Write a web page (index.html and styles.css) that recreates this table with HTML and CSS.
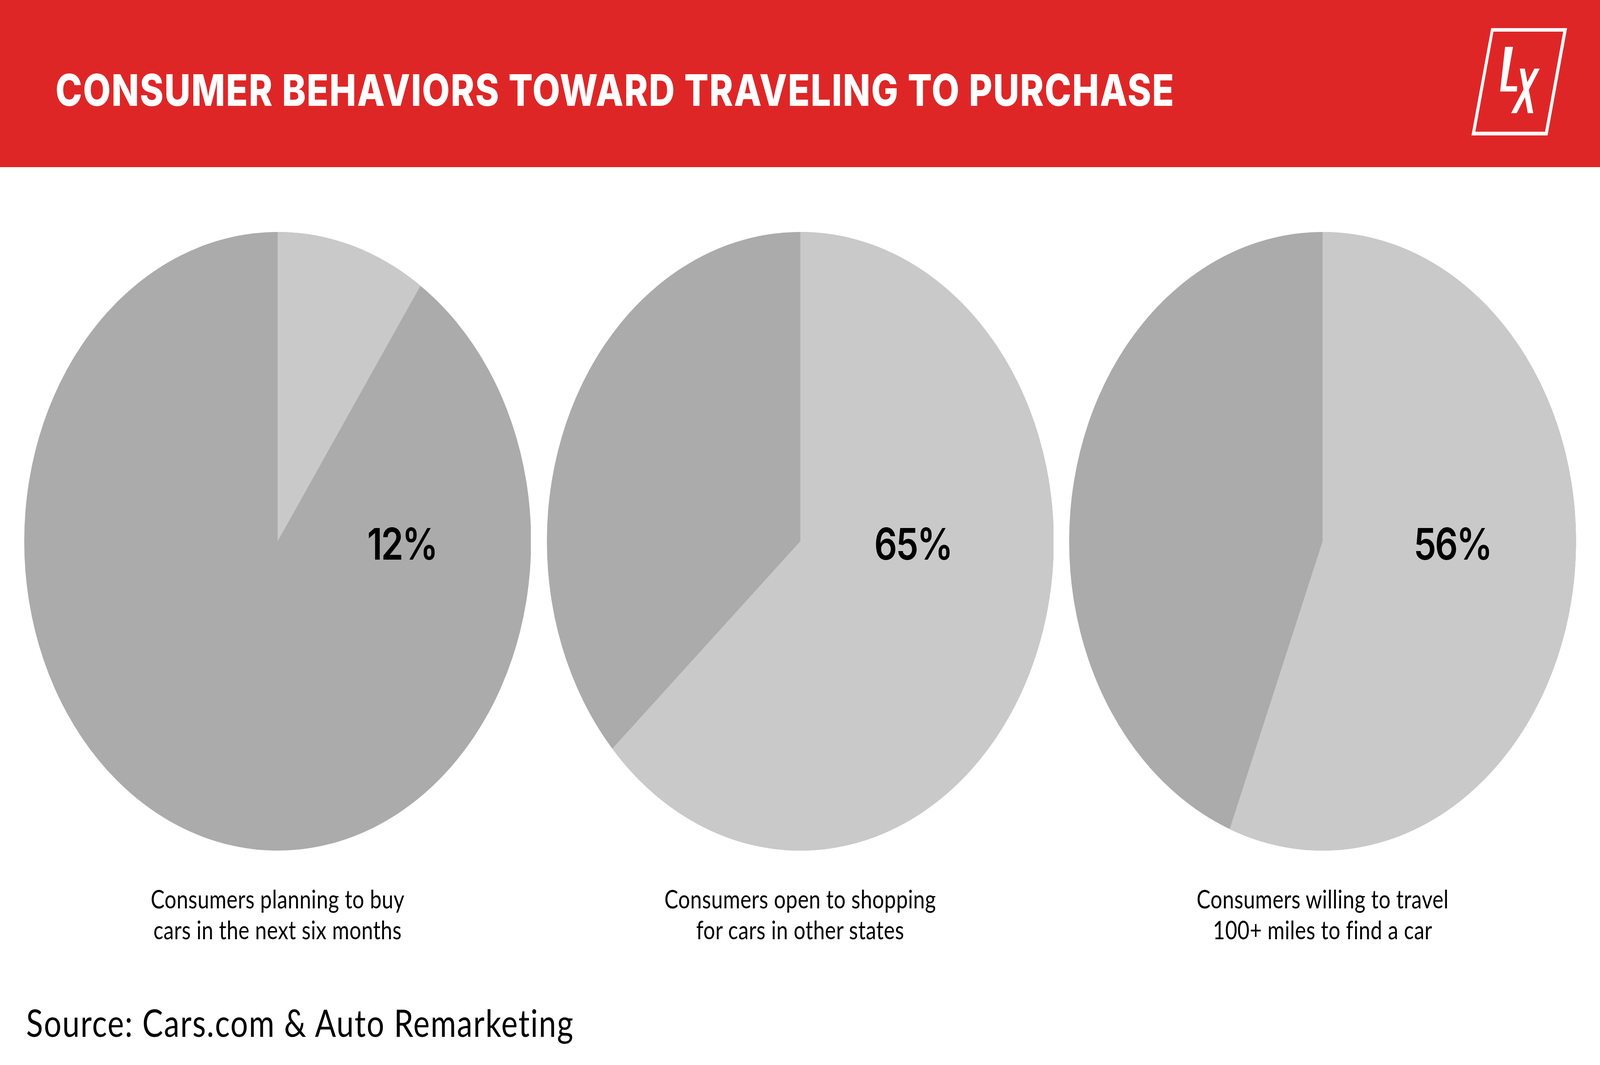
FILE: index.html
```html
<!DOCTYPE html>
<html lang="en">
<head>
<meta charset="utf-8">
<title>Consumer Behaviors Toward Traveling to Purchase</title>
<link rel="stylesheet" href="styles.css">
</head>
<body>
<div class="page">
  <header class="banner">
    <h1 class="banner-title">CONSUMER BEHAVIORS TOWARD TRAVELING TO PURCHASE</h1>
    <svg class="logo" viewBox="0 0 300 276" preserveAspectRatio="none" aria-label="LX logo">
      <path fill="#fff" fill-rule="evenodd" d="M61.7 0 L298.7 0 L237.7 274.7 L0 274.7 Z M68.7 9 L286.7 9 L230 265.3 L12 265.3 Z"/>
      <path fill="#fff" d="M105 48 L129.7 48 L108.3 148.7 L143 148.7 L141.7 162.3 L89.7 162.3 Z"/>
      <path fill="#fff" d="M151 103.7 L166.7 103.7 L193 217.7 L176 217.7 Z"/>
      <path fill="#fff" d="M196.7 103.7 L213.3 103.7 L141.3 217.7 L124 217.7 Z"/>
    </svg>
  </header>

  <main class="charts">
    <section class="chart">
      <div class="pie">
        <svg viewBox="0 0 1584 1584" preserveAspectRatio="none">
          <circle cx="792" cy="792" r="792" fill="#ababab"/>
          <path d="M792 792 L792 0 A792 792 0 0 1 1238.3 137.7 Z" fill="#c9c9c9"/>
        </svg>
        <span class="pct pct-1">12%</span>
      </div>
      <p class="caption">Consumers planning to buy<br>cars in the next six months</p>
    </section>
    <section class="chart">
      <div class="pie">
        <svg viewBox="0 0 1584 1584" preserveAspectRatio="none">
          <circle cx="792" cy="792" r="792" fill="#ababab"/>
          <path d="M792 792 L792 0 A792 792 0 1 1 204.5 1323 Z" fill="#c9c9c9"/>
        </svg>
        <span class="pct pct-2">65%</span>
      </div>
      <p class="caption">Consumers open to shopping<br>for cars in other states</p>
    </section>
    <section class="chart">
      <div class="pie">
        <svg viewBox="0 0 1584 1584" preserveAspectRatio="none">
          <circle cx="792" cy="792" r="792" fill="#ababab"/>
          <path d="M792 792 L792 0 A792 792 0 1 1 501.7 1528.9 Z" fill="#c9c9c9"/>
        </svg>
        <span class="pct pct-3">56%</span>
      </div>
      <p class="caption">Consumers willing to travel<br>100+ miles to find a car</p>
    </section>
  </main>

  <footer class="source"><span class="source-text">Source: Cars.com &amp; Auto Remarketing</span></footer>
</div>
<script src="fit.js"></script>
</body>
</html>
```

FILE: styles.css
```css
/* Horizontal measures are expressed as fractions of the 5000px-wide design
   (1 design px = 0.02vw); vertical measures are in px of the 2727px-tall design.
   --sx is the horizontal scale applied to text so it keeps the design's proportions. */
:root {
  --sx: 0.8192;
}

html, body {
  margin: 0;
  padding: 0;
  background: #ffffff;
  overflow: hidden;
}

.page {
  width: 100vw;
  height: 2727px;
  font-family: "Lato", "Liberation Sans", sans-serif;
  color: #000;
  background: #ffffff;
}

.banner {
  box-sizing: border-box;
  height: 428px;
  background: #df2627;
  display: flex;
  align-items: center;
  justify-content: space-between;
  padding: 0 2.04vw 0 3.46vw;
}

.banner-title {
  margin: 31px 0 0 0;
  font-family: "Inter", "Liberation Sans", sans-serif;
  font-weight: 800;
  font-size: 112px;
  line-height: 1;
  letter-spacing: 2.7px;
  color: #ffffff;
  white-space: nowrap;
  transform: scaleX(var(--sx));
  transform-origin: 0 50%;
}

.logo {
  display: block;
  flex: none;
  width: 6vw;
  height: 276px;
  margin-bottom: 9px;
}

.charts {
  display: grid;
  grid-template-columns: repeat(3, 32.66vw);
  padding: 166px 0 0 1.02vw;
}

.chart {
  display: flex;
  flex-direction: column;
  align-items: center;
}

.pie {
  position: relative;
  width: 31.68vw;
  height: 1584px;
}

.pie svg {
  display: block;
  width: 100%;
  height: 100%;
}

.pct {
  position: absolute;
  top: 742px;
  font-family: "Inter", "Liberation Sans", sans-serif;
  font-weight: 600;
  font-size: 112px;
  line-height: 1;
  letter-spacing: -4px;
  color: #000;
  white-space: nowrap;
  transform: scaleX(var(--sx));
  transform-origin: 0 50%;
}

.pct-1 { left: 21.44vw; }
.pct-2 { left: 20.46vw; }
.pct-3 { left: 21.52vw; }

.caption {
  margin: 84px 0 0 0;
  font-family: "Lato", "Liberation Sans", sans-serif;
  font-weight: 400;
  font-size: 65px;
  line-height: 79px;
  letter-spacing: 0.6px;
  text-align: center;
  white-space: nowrap;
  transform: scaleX(var(--sx));
  transform-origin: 50% 50%;
}

.source {
  margin-top: 140px;
  padding-left: 1.64vw;
}

.source-text {
  display: inline-block;
  font-family: "Lato", "Liberation Sans", sans-serif;
  font-weight: 400;
  font-size: 97px;
  line-height: 1.2;
  letter-spacing: 2.8px;
  white-space: nowrap;
  transform: scaleX(var(--sx));
  transform-origin: 0 50%;
}
```

FILE: fit.js
```js
(function () {
  var sx = window.innerWidth / 5000;
  document.documentElement.style.setProperty('--sx', String(sx));
})();
```
